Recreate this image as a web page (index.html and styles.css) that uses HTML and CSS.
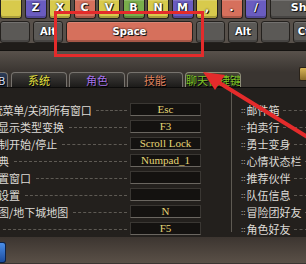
FILE: index.html
```html
<!DOCTYPE html>
<html lang="zh">
<head>
    <meta charset="UTF-8">
    <meta name="viewport" content="width=device-width, initial-scale=1.0">
    <title>快捷键设置</title>
    <link rel="stylesheet" href="styles.css">
</head>
<body>
    <div class="screen">
        <div class="keyboard">
            <div class="krow top">
                <div class="key yellow"></div>
                <div class="key blue">Z</div>
                <div class="key yellow">X</div>
                <div class="key red">C</div>
                <div class="key yellow">V</div>
                <div class="key green">B</div>
                <div class="key yellow">N</div>
                <div class="key blue">M</div>
                <div class="key yellow">,</div>
                <div class="key red">.</div>
                <div class="key blue">/</div>
                <div class="key gray shift">Shift</div>
            </div>
            <div class="krow bottom">
                <div class="key gray w30"></div>
                <div class="key gray w30">Alt</div>
                <div class="key red space">Space</div>
                <div class="key gray w29"></div>
                <div class="key gray w30">Alt</div>
                <div class="key gray w29"></div>
                <div class="key gray w30">Ctrl</div>
            </div>
            <div class="kbase"></div>
        </div>

        <div class="tabs">
            <div class="tab stub">B</div>
            <div class="tab t-sys">系统</div>
            <div class="tab t-char">角色</div>
            <div class="tab t-skill">技能</div>
            <div class="tab t-chat on">聊天快捷键</div>
            <div class="corner-btn"></div>
        </div>

        <div class="panel">
            <div class="col-left">
                <div class="row"><span class="label first">統菜单/关闭所有窗口</span><span class="lead"></span><span class="kbox">Esc</span></div>
                <div class="row"><span class="label">显示类型变换</span><span class="lead"></span><span class="kbox">F3</span></div>
                <div class="row"><span class="label">制开始/停止</span><span class="lead"></span><span class="kbox">Scroll Lock</span></div>
                <div class="row"><span class="label">典</span><span class="lead"></span><span class="kbox">Numpad_1</span></div>
                <div class="row"><span class="label">置窗口</span><span class="lead"></span><span class="kbox"></span></div>
                <div class="row"><span class="label">设置</span><span class="lead"></span><span class="kbox"></span></div>
                <div class="row"><span class="label">图/地下城地图</span><span class="lead"></span><span class="kbox">N</span></div>
                <div class="row"><span class="label"></span><span class="lead"></span><span class="kbox">F5</span></div>
            </div>
            <div class="col-right">
                <div class="ritem"><span class="dots">::</span><span class="rlabel">邮件箱</span><span class="lead"></span></div>
                <div class="ritem"><span class="dots">::</span><span class="rlabel">拍卖行</span><span class="lead"></span></div>
                <div class="ritem"><span class="dots">::</span><span class="rlabel">勇士变身</span><span class="lead"></span></div>
                <div class="ritem"><span class="dots">::</span><span class="rlabel">心情状态栏</span><span class="lead"></span></div>
                <div class="ritem"><span class="dots">::</span><span class="rlabel">推荐伙伴</span><span class="lead"></span></div>
                <div class="ritem"><span class="dots">::</span><span class="rlabel">队伍信息</span><span class="lead"></span></div>
                <div class="ritem"><span class="dots">::</span><span class="rlabel">冒险团好友</span><span class="lead"></span></div>
                <div class="ritem"><span class="dots">::</span><span class="rlabel">角色好友</span><span class="lead"></span></div>
            </div>
        </div>

        <div class="foot">
            <div class="bluebtn"></div>
        </div>

        <!-- red markup drawn over the screenshot -->
        <svg class="markup" width="306" height="264" viewBox="0 0 306 264">
            <rect x="55.5" y="12.5" width="147" height="43" fill="none" stroke="#e42b2b" stroke-width="3"/>
            <line x1="218" y1="82" x2="322" y2="146" stroke="#e42b2b" stroke-width="4"/>
            <polygon points="203,72 215,90 225,75" fill="#e42b2b"/>
        </svg>
    </div>
</body>
</html>
```

FILE: styles.css
```css
body{
    margin: 0;
    background: #2a2622;
    font-family: "Noto Sans CJK SC", "Noto Sans", sans-serif;
}
.screen{
    position: relative;
    width: 306px;
    height: 264px;
    overflow: hidden;
    background: linear-gradient(#57504a 52px, #3a3531 72px);
}
.krow{
    display: flex;
}
.top{
    gap: 2.5px;
}
.bottom{
    gap: 3px;
    margin-top: 2px;
}
.key{
    flex: none;
    box-sizing: border-box;
    border: 1px solid #24211e;
    color: #fff;
    font-family: "DejaVu Sans", sans-serif;
    font-weight: bold;
    text-align: center;
    text-shadow: 0 0 2px #000, 1px 1px 0 #1a1a1a;
    box-shadow: inset 0 -2px 0 rgba(0, 0, 0, 0.22), inset 0 1px 0 rgba(255, 255, 255, 0.15);
    white-space: nowrap;
    overflow: hidden;
}
.top .key{
    width: 22px;
    height: 19px;
    border-top: none;
    border-radius: 0 0 3px 3px;
    padding-top: 2px;
    font-size: 11px;
    line-height: 11px;
}
.bottom .key{
    height: 22px;
    border-radius: 3px;
    font-size: 10px;
    line-height: 20px;
}
.yellow{ background: #d8ca4c; }
.blue{ background: #6a5cc0; }
.red{ background: #d6705c; }
.green{ background: #79ae4b; }
.gray{ background: #5b5956; }
.top .shift{
    width: 72px;
}
.w30{ width: 30px; }
.w29{ width: 29px; }
.space{ width: 127px; }
.kbase{
    height: 7px;
    background: #1f1c19;
    border-bottom: 1px solid #141210;
}

.tabs{
    display: flex;
    align-items: flex-end;
    gap: 2px;
    height: 16px;
    margin-top: 20px;
    border-bottom: 1px solid #0d0c0b;
}
.tab{
    width: 56px;
    height: 15px;
    box-sizing: border-box;
    border: 1px solid #77736e;
    border-bottom: none;
    border-radius: 4px 4px 0 0;
    background: linear-gradient(#3f3d3a, #1c1b1a);
    font-size: 11px;
    line-height: 15px;
    text-align: center;
    text-shadow: 1px 1px 0 #000;
    white-space: nowrap;
    overflow: hidden;
}
.tab.stub{
    width: 8px;
    margin-right: 1px;
    border-left: none;
    border-radius: 0 4px 0 0;
    background: linear-gradient(#2c3c58, #18202e);
    color: #d8e4ff;
    text-indent: -4px;
}
.t-sys{ color: #e4e03c; }
.t-char{ color: #a472ea; }
.t-skill{ color: #e0825e; }
.t-chat{ color: #7cc424; }
.tab.on{
    background: linear-gradient(#464636, #24241c);
    border-color: #8e8e78;
}
.corner-btn{
    margin-left: auto;
    margin-bottom: 6px;
    width: 7px;
    height: 14px;
    box-sizing: border-box;
    background: linear-gradient(#d8b456, #8a6a28);
    border: 1px solid #2a2218;
    border-right: none;
    border-radius: 2px 0 0 2px;
}

.panel{
    display: flex;
    height: 149px;
    padding-top: 4px;
    box-sizing: border-box;
    background: #23201d;
}
.col-left{
    width: 201px;
    flex: none;
    padding-top: 11px;
}
.row{
    display: flex;
    align-items: center;
    height: 13px;
    margin-bottom: 4px;
}
.label{
    margin-left: -2px;
    font-size: 11px;
    color: #dedbd6;
    white-space: nowrap;
}
.label.first{
    margin-left: -8px;
    letter-spacing: -0.4px;
}
.lead{
    flex: 1;
    height: 0;
    margin: 1px 3px 0 5px;
    border-bottom: 1px dashed #5e5a54;
}
.kbox{
    width: 71px;
    height: 13px;
    box-sizing: border-box;
    background: #141210;
    border: 1px solid #3a3733;
    border-bottom-color: #6a6660;
    color: #e6d676;
    font-family: "Liberation Serif", serif;
    font-size: 11px;
    line-height: 11px;
    text-align: center;
    white-space: nowrap;
    overflow: hidden;
}
.col-right{
    flex: 1;
    height: 140px;
    margin-left: 30px;
    padding: 11px 0 0 9px;
    box-sizing: border-box;
    border-left: 1px solid #5e5a53;
}
.ritem{
    display: flex;
    align-items: center;
    height: 13px;
    margin-bottom: 4px;
    white-space: nowrap;
}
.dots{
    font-size: 8px;
    color: #bcb8b2;
    margin-right: 1px;
}
.rlabel{
    font-size: 11px;
    color: #dedbd6;
}
.ritem .lead{
    margin: 1px -2px 0 4px;
}

.foot{
    height: 26px;
    padding-top: 5px;
    box-sizing: border-box;
    background: linear-gradient(#3c3530, #5a5047);
}
.bluebtn{
    width: 6px;
    height: 21px;
    box-sizing: border-box;
    background: linear-gradient(#4a8ee8, #1c4c9e);
    border: 1px solid #0c2248;
    border-left: none;
    border-radius: 0 3px 3px 0;
}
.markup{
    position: absolute;
    top: 0;
    left: 0;
    pointer-events: none;
}
```
